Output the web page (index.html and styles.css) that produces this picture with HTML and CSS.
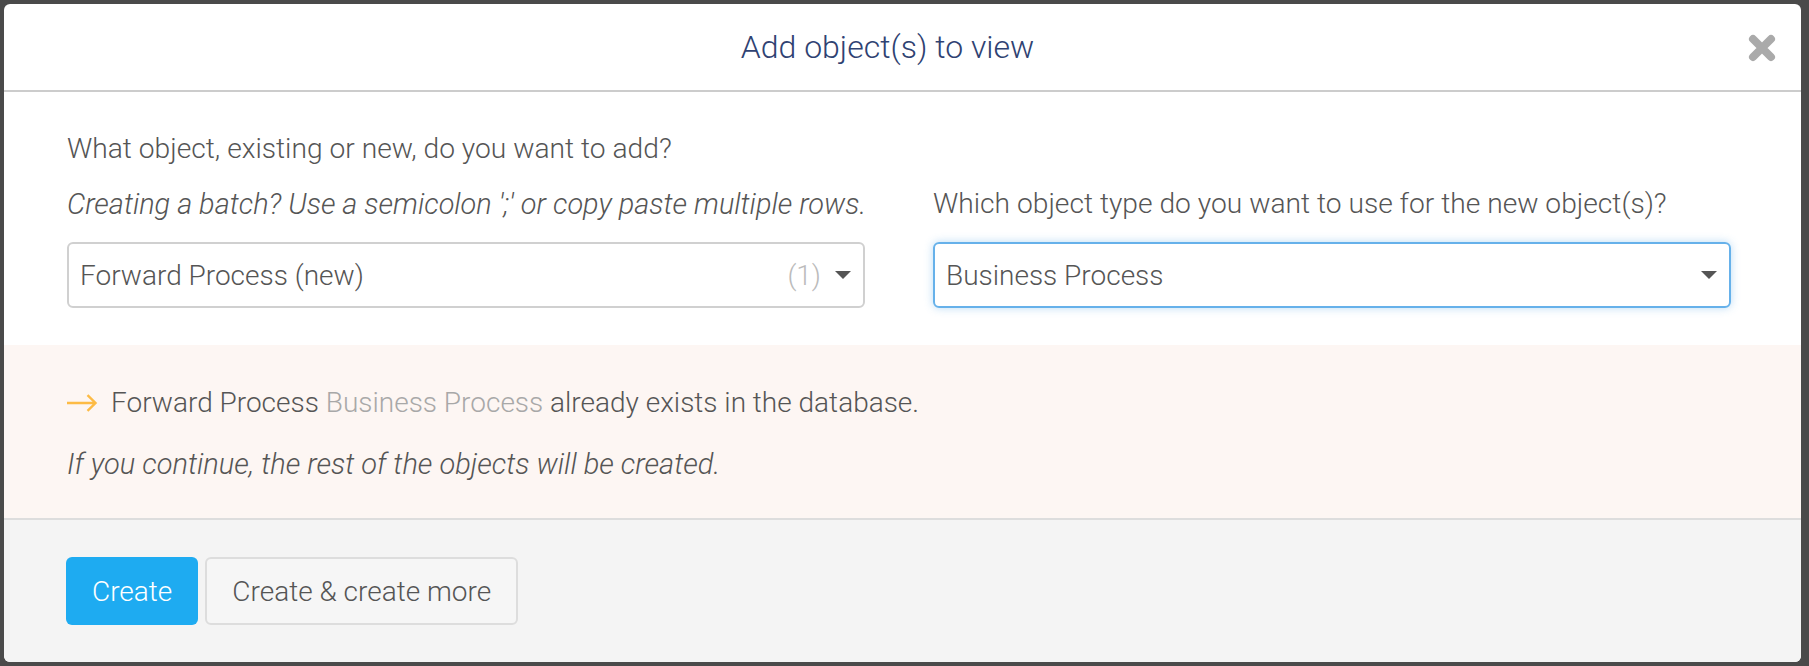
FILE: index.html
```html
<!DOCTYPE html>
<html lang="en">
<head>
<meta charset="utf-8">
<title>Add object(s) to view</title>
<link rel="stylesheet" href="styles.css">
</head>
<body>
<div class="modal">
  <header class="modal-header">
    <h2 class="modal-title">Add object(s) to view</h2>
    <button class="close" aria-label="Close">
      <svg width="28" height="28" viewBox="0 0 28 28"><path d="M5 5 L23 23 M23 5 L5 23" stroke="#aaaaaa" stroke-width="8" stroke-linecap="round" fill="none"/></svg>
    </button>
  </header>
  <section class="modal-body">
    <div class="field-row">
      <div class="field">
        <p class="label">What object, existing or new, do you want to add?</p>
        <p class="hint">Creating a batch? Use a semicolon ';' or copy paste multiple rows.</p>
        <div class="select">
          <span class="value">Forward Process (new)</span>
          <span class="count">(1)</span>
          <span class="caret"></span>
        </div>
      </div>
      <div class="field">
        <p class="label">Which object type do you want to use for the new object(s)?</p>
        <div class="select focused">
          <span class="value">Business Process</span>
          <span class="caret"></span>
        </div>
      </div>
    </div>
  </section>
  <section class="notice">
    <p class="notice-line"><svg class="arrow" width="32" height="18" viewBox="0 0 32 18"><path d="M1 9 H29.5 M21.5 1.2 L29.5 9 L21.5 16.8" stroke="#fdbb45" stroke-width="2.4" fill="none" stroke-linejoin="miter"/></svg>Forward Process <span class="muted">Business Process</span> already exists in the database.</p>
    <p class="notice-note">If you continue, the rest of the objects will be created.</p>
  </section>
  <footer class="modal-footer">
    <button class="btn btn-primary">Create</button>
    <button class="btn btn-default">Create &amp; create more</button>
  </footer>
</div>
</body>
</html>
```
FILE: styles.css
```css
html, body {
  margin: 0;
  height: 100%;
}
body {
  background: #4a4a4a;
  padding: 4px 8px 4px 4px;
  box-sizing: border-box;
  font-family: Roboto, "Liberation Sans", sans-serif;
  font-weight: 300;
  color: #555555;
}
.modal {
  height: 658px;
  background: #ffffff;
  border-radius: 6px;
  overflow: hidden;
  display: flex;
  flex-direction: column;
}
.modal-header {
  height: 86px;
  border-bottom: 2px solid #cccccc;
  display: flex;
  align-items: center;
  padding: 0 24px;
  flex: none;
}
.modal-title {
  flex: 1;
  margin: 0;
  text-align: center;
  font-size: 32px;
  font-weight: 300;
  color: #2f4272;
}
.close {
  border: 0;
  background: none;
  padding: 0;
  width: 30px;
  height: 30px;
  display: flex;
  align-items: center;
  justify-content: center;
  margin-top: 2px;
}
.modal-body {
  padding: 37px 70px 37px 63px;
  flex: none;
}
.field-row {
  display: grid;
  grid-template-columns: minmax(0, 1fr) minmax(0, 1fr);
  column-gap: 68px;
  align-items: end;
}
.field p {
  margin: 0;
  white-space: nowrap;
}
.label {
  font-size: 28.2px;
  line-height: 40px;
}
.hint {
  font-size: 28.9px;
  line-height: 40px;
  font-style: italic;
  margin-top: 15px !important;
}
.select {
  margin-top: 18px;
  height: 66px;
  box-sizing: border-box;
  border: 2px solid #d0d0d0;
  border-radius: 6px;
  display: flex;
  align-items: center;
  padding: 0 12px 0 11px;
  font-size: 28px;
  color: #555555;
}
.select.focused {
  border-color: #66b1ea;
  box-shadow: 0 0 8px rgba(102, 175, 233, 0.45);
}
.select .value {
  flex: 1;
}
.select .count {
  color: #bbbbbb;
  margin-right: 14px;
}
.caret {
  width: 0;
  height: 0;
  border-left: 8px solid transparent;
  border-right: 8px solid transparent;
  border-top: 8px solid #555555;
}
.notice {
  background: #fdf6f3;
  height: 175px;
  box-sizing: border-box;
  padding: 38px 63px 0;
  border-bottom: 2px solid #dddddd;
  flex: none;
}
.notice p {
  margin: 0;
  line-height: 40px;
}
.notice-line {
  font-size: 28px;
  display: flex;
  align-items: center;
  white-space: pre;
}
.arrow {
  margin: 0 13px 0 -1px;
}
.muted {
  color: #a8a8a8;
}
.notice-note {
  font-size: 29px;
  font-style: italic;
  margin-top: 21px !important;
}
.modal-footer {
  flex: 1;
  background: #f4f4f4;
  padding: 37px 62px;
  display: flex;
  gap: 7px;
  align-items: flex-start;
}
.btn {
  height: 68px;
  font-family: Roboto, "Liberation Sans", sans-serif;
  font-weight: 300;
  font-size: 28px;
  border-radius: 6px;
  padding: 0 26px;
  cursor: pointer;
}
.btn-primary {
  background: #1eabf1;
  border: 0;
  color: #ffffff;
}
.btn-default {
  background: #f6f6f6;
  border: 2px solid #dddddd;
  color: #555555;
  padding: 0 25px;
}
```
